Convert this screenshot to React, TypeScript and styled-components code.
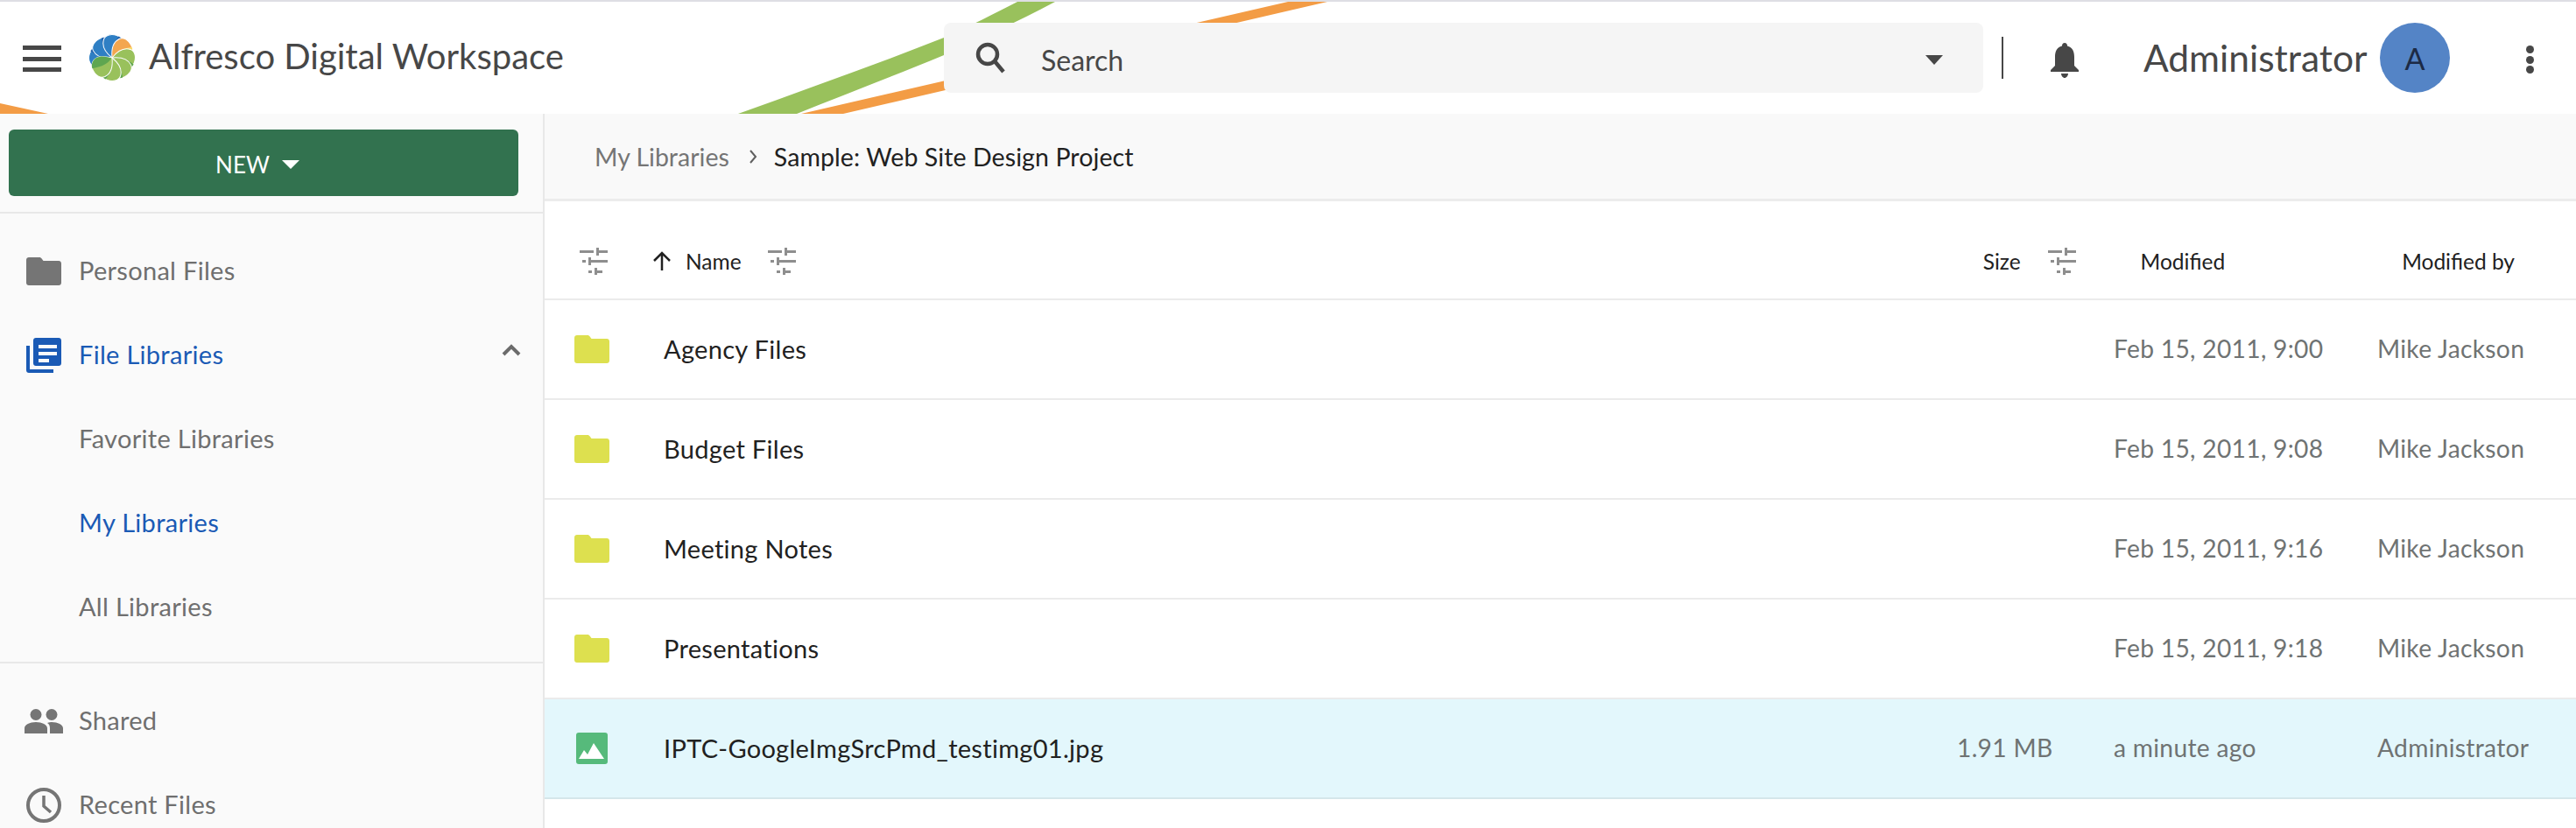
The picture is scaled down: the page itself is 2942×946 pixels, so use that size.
import React from 'react';
import styled, { createGlobalStyle } from 'styled-components';

const GlobalStyle = createGlobalStyle`
  html, body {
    margin: 0;
    padding: 0;
    background: #fff;
  }
  body {
    font-family: 'Lato', 'Liberation Sans', sans-serif;
  }
`;

interface RowData {
  name: string;
  size?: string;
  modified: string;
  by: string;
  kind: 'folder' | 'image';
}

const rows: RowData[] = [
  { name: 'Agency Files', modified: 'Feb 15, 2011, 9:00', by: 'Mike Jackson', kind: 'folder' },
  { name: 'Budget Files', modified: 'Feb 15, 2011, 9:08', by: 'Mike Jackson', kind: 'folder' },
  { name: 'Meeting Notes', modified: 'Feb 15, 2011, 9:16', by: 'Mike Jackson', kind: 'folder' },
  { name: 'Presentations', modified: 'Feb 15, 2011, 9:18', by: 'Mike Jackson', kind: 'folder' },
  {
    name: 'IPTC-GoogleImgSrcPmd_testimg01.jpg',
    size: '1.91 MB',
    modified: 'a minute ago',
    by: 'Administrator',
    kind: 'image',
  },
];

const petals = [
  { angle: -80, main: '#2f7fc4', dark: '#2563ad' },
  { angle: -35, main: '#2f7fc4', dark: '#2563ad' },
  { angle: 10, main: '#2f7fc4', dark: '#2563ad' },
  { angle: 55, main: '#f3a64f', dark: '#fbd968' },
  { angle: 100, main: '#99c15c', dark: '#5fa650' },
  { angle: 145, main: '#99c15c', dark: '#5fa650' },
  { angle: 190, main: '#99c15c', dark: '#5fa650' },
  { angle: 235, main: '#99c15c', dark: '#5fa650' },
];

const Logo = () => (
  <LogoSvg viewBox="-27 -27 54 54">
    {petals.map((p) => (
      <g key={p.angle} transform={`rotate(${p.angle})`}>
        <path
          d="M0 0C-9 -5 -14 -12 -13 -19C-12 -25 -5 -27 1 -26C7 -25 11 -20 10 -14C9 -8 4 -4 0 0Z"
          fill={p.main}
          stroke="#fff"
          strokeWidth="1"
        />
        <path d="M0 -1C-3 -7 -2 -15 3 -25.500C7 -24.500 11 -20 10 -14C9 -8 4 -4 0 -1Z" fill={p.dark} />
      </g>
    ))}
  </LogoSvg>
);

const FilterIcon = () => (
  <Filter viewBox="0 0 32 32">
    <path d="M0 4h16v3H0zM19 1h3v3h10v3H22v3h-3zM3 15h4v3H3zM10 12h3v3h19v3H13v3h-3zM10 27h4v3h-4zM17 24h3v3h6v3h-6v2h-3z" />
  </Filter>
);

const FolderShape = ({ color }: { color: string }) => (
  <svg viewBox="0 0 40 32" width="40" height="32">
    <path
      d="M3 0h12c1 0 2 .5 3 2l1.500 2H37c1.700 0 3 1.300 3 3v22c0 1.700-1.300 3-3 3H3c-1.700 0-3-1.300-3-3V3c0-1.700 1.300-3 3-3z"
      fill={color}
    />
  </svg>
);

const ImageShape = () => (
  <svg viewBox="0 0 36 36" width="36" height="36">
    <rect width="36" height="36" rx="3" fill="#56ba7b" />
    <path d="M3 30l6-10 4 5 7-13 12 18z" fill="#fff" />
  </svg>
);

const App = () => (
  <Page>
    <GlobalStyle />
    <Header>
      <Swoosh viewBox="0 0 1600 128">
        <path d="M0 116L55 128H0Z" fill="#f39c45" />
        <path d="M915 128L1471 0H1516L963 128Z" fill="#f39c45" />
        <path
          d="M843 128C920 100 1000 72 1078 41C1110 27 1136 13 1162 0H1205C1160 24 1120 42 1078 61C1020 85 965 106 910 128Z"
          fill="#99c15c"
        />
      </Swoosh>
      <Burger>
        <span />
        <span />
        <span />
      </Burger>
      <Logo />
      <Title>Alfresco Digital Workspace</Title>
      <SearchBox>
        <svg viewBox="0 0 34 36" width="34" height="36">
          <circle cx="14" cy="14" r="11" fill="none" stroke="#474747" strokeWidth="4.500" />
          <path d="M22 22l10 12" stroke="#474747" strokeWidth="4.500" />
        </svg>
        <SearchText>Search</SearchText>
        <SearchCaret />
      </SearchBox>
      <Divider />
      <Bell viewBox="0 0 32 40">
        <path d="M16 0c2 0 3 1.500 3 3.500C25 5 27 10 27 16v10l5 5v2H0v-2l5-5V16C5 10 7 5 13 3.500 13 1.500 14 0 16 0zM12 35h8c0 2.500-2 5-4 5s-4-2.500-4-5z" />
      </Bell>
      <UserName>Administrator</UserName>
      <Avatar>A</Avatar>
      <MoreDots>
        <span />
        <span />
        <span />
      </MoreDots>
    </Header>
    <Body>
      <Sidebar>
        <NewArea>
          <NewButton>
            NEW <NewCaret />
          </NewButton>
        </NewArea>
        <NavGroup>
          <NavItem>
            <NavIcon viewBox="0 0 40 32" width="40" height="32">
              <path
                d="M3 0h12c1 0 2 .5 3 2l1.500 2H37c1.700 0 3 1.300 3 3v22c0 1.700-1.300 3-3 3H3c-1.700 0-3-1.300-3-3V3c0-1.700 1.300-3 3-3z"
                fill="#757575"
              />
            </NavIcon>
            Personal Files
          </NavItem>
          <NavItem $active>
            <NavIcon viewBox="0 0 40 40" width="40" height="40">
              <path d="M0 9h4v27h27v4H3c-1.700 0-3-1.300-3-3z" fill="#1a5ab5" />
              <path
                d="M11 0h26c1.700 0 3 1.300 3 3v26c0 1.700-1.300 3-3 3H11c-1.700 0-3-1.300-3-3V3c0-1.700 1.300-3 3-3zm3 8v4h21V8zm0 8v4h21v-4zm0 8v4h12v-4z"
                fill="#1a5ab5"
                fillRule="evenodd"
              />
            </NavIcon>
            File Libraries
            <Chevron viewBox="0 0 22 14" width="22" height="14">
              <path d="M2 12l9-9 9 9" fill="none" stroke="#6b6b6b" strokeWidth="4" />
            </Chevron>
          </NavItem>
          <NavItem>
            <NavSpacer />
            Favorite Libraries
          </NavItem>
          <NavItem $active>
            <NavSpacer />
            My Libraries
          </NavItem>
          <NavItem>
            <NavSpacer />
            All Libraries
          </NavItem>
        </NavGroup>
        <NavGroup>
          <NavItem>
            <SharedIcon viewBox="0 0 44 28" width="44" height="28">
              <circle cx="13" cy="6.500" r="6.500" fill="#757575" />
              <circle cx="31" cy="6.500" r="6.500" fill="#757575" />
              <path
                d="M0 28v-6c0-4 6-7 13-7s13 3 13 7v6zM29 28v-6c0-3-1-5-3-6 2-.7 4-1 5-1 7 0 13 3 13 7v6z"
                fill="#757575"
              />
            </SharedIcon>
            Shared
          </NavItem>
          <NavItem>
            <NavIcon viewBox="0 0 40 40" width="40" height="40">
              <circle cx="20" cy="20" r="18" fill="none" stroke="#757575" strokeWidth="4" />
              <path d="M20 9v12l8 7" fill="none" stroke="#757575" strokeWidth="3.500" />
            </NavIcon>
            Recent Files
          </NavItem>
        </NavGroup>
      </Sidebar>
      <Main>
        <Breadcrumb>
          <CrumbLink>My Libraries</CrumbLink>
          <svg viewBox="0 0 10 16" width="10" height="16">
            <path d="M2 1l6 7-6 7" fill="none" stroke="#5f5f5f" strokeWidth="2" />
          </svg>
          <CrumbCurrent>Sample: Web Site Design Project</CrumbCurrent>
        </Breadcrumb>
        <TableHead>
          <FilterIcon />
          <SortArrow viewBox="0 0 22 22" width="22" height="22">
            <path d="M11 22V2M2 11l9-9 9 9" fill="none" stroke="#212121" strokeWidth="2.500" />
          </SortArrow>
          <HeadLabel $right={30}>Name</HeadLabel>
          <FilterIcon />
          <HeadSpacer />
          <HeadLabel $right={31}>Size</HeadLabel>
          <FilterIcon />
          <HeadLabel $left={74}>Modified</HeadLabel>
          <HeadLabel $left={202}>Modified by</HeadLabel>
        </TableHead>
        {rows.map((row) => (
          <Row key={row.name} $selected={row.kind === 'image'}>
            <RowIcon>{row.kind === 'folder' ? <FolderShape color="#dde04f" /> : <ImageShape />}</RowIcon>
            <RowName>{row.name}</RowName>
            <SizeCell>{row.size}</SizeCell>
            <MetaCell>{row.modified}</MetaCell>
            <MetaCell>{row.by}</MetaCell>
          </Row>
        ))}
      </Main>
    </Body>
  </Page>
);

const Page = styled.div`
  width: 2942px;
  height: 946px;
  overflow: hidden;
  display: flex;
  flex-direction: column;
`;

const Header = styled.header`
  position: relative;
  flex: none;
  height: 128px;
  border-top: 2px solid #dedee4;
  display: flex;
  align-items: center;
  padding-left: 26px;
  background: #fff;
  color: #474747;
  > * {
    position: relative;
  }
`;

const Swoosh = styled.svg`
  && {
    position: absolute;
  }
  left: 0;
  top: 0;
  width: 1600px;
  height: 128px;
`;

const Burger = styled.div`
  width: 44px;
  height: 30px;
  display: flex;
  flex-direction: column;
  justify-content: space-between;
  margin-right: 31px;
  margin-top: 2px;
  span {
    display: block;
    height: 5px;
    background: #474747;
  }
`;

const LogoSvg = styled.svg`
  width: 54px;
  height: 54px;
  flex: none;
  margin-top: -1px;
`;

const Title = styled.div`
  margin-left: 15px;
  width: 476px;
  font-size: 40px;
  font-weight: 400;
  white-space: nowrap;
  margin-top: -4px;
`;

const SearchBox = styled.div`
  margin-left: 432px;
  width: 1187px;
  height: 80px;
  box-sizing: border-box;
  background: #f5f5f5;
  border-radius: 8px;
  display: flex;
  align-items: center;
  padding: 0 46px 0 36px;
`;

const SearchText = styled.span`
  margin-left: 41px;
  font-size: 32px;
  color: #474747;
  margin-top: 4px;
`;

const SearchCaret = styled.span`
  margin-left: auto;
  width: 0;
  height: 0;
  border-left: 10px solid transparent;
  border-right: 10px solid transparent;
  border-top: 11px solid #474747;
  margin-top: 4px;
`;

const Divider = styled.div`
  width: 2px;
  height: 48px;
  margin-left: 21px;
  background: #474747;
`;

const Bell = styled.svg`
  width: 32px;
  height: 40px;
  margin-left: 54px;
  fill: #474747;
  margin-top: 5px;
`;

const UserName = styled.div`
  margin-left: 74px;
  width: 254px;
  font-size: 42.500px;
  font-weight: 400;
  white-space: nowrap;
  margin-top: -2px;
`;

const Avatar = styled.div`
  margin-left: 16px;
  width: 80px;
  height: 80px;
  border-radius: 50%;
  background: #5484c6;
  color: #1c2a45;
  display: flex;
  align-items: center;
  justify-content: center;
  font-size: 34px;
`;

const MoreDots = styled.div`
  margin-left: 87px;
  width: 9px;
  height: 32px;
  margin-top: 4px;
  display: flex;
  flex-direction: column;
  justify-content: space-between;
  span {
    width: 9px;
    height: 9px;
    border-radius: 50%;
    background: #474747;
  }
`;

const Body = styled.div`
  flex: 1;
  min-height: 0;
  display: flex;
`;

const Sidebar = styled.aside`
  flex: none;
  width: 620px;
  background: #fafafa;
  border-right: 2px solid #e8e8e8;
`;

const NewArea = styled.div`
  height: 114px;
  box-sizing: border-box;
  padding: 18px 28px 0 10px;
  border-bottom: 2px solid #e8e8e8;
`;

const NewButton = styled.div`
  height: 76px;
  box-sizing: border-box;
  padding: 4px 14px 0 0;
  border-radius: 6px;
  background: #32724f;
  color: #fff;
  display: flex;
  align-items: center;
  justify-content: center;
  gap: 14px;
  font-size: 26px;
`;

const NewCaret = styled.span`
  width: 0;
  height: 0;
  border-left: 10px solid transparent;
  border-right: 10px solid transparent;
  border-top: 10px solid #fff;
`;

const NavGroup = styled.div`
  padding: 18px 0 14px;
  border-bottom: 2px solid #e8e8e8;
  &:last-child {
    border-bottom: 0;
  }
`;

const NavItem = styled.div<{ $active?: boolean }>`
  height: 96px;
  box-sizing: border-box;
  padding: 0 25px 3px 30px;
  display: flex;
  align-items: center;
  font-size: 29px;
  letter-spacing: 0.3px;
  color: ${(p) => (p.$active ? '#1a5ab5' : '#6f6f6f')};
`;

const NavIcon = styled.svg`
  flex: none;
  margin-right: 20px;
  margin-top: 3px;
`;

const SharedIcon = styled(NavIcon)`
  margin-left: -2px;
  margin-right: 18px;
`;

const NavSpacer = styled.span`
  width: 60px;
`;

const Chevron = styled.svg`
  margin-left: auto;
  margin-top: -10px;
`;

const Main = styled.main`
  flex: 1;
  min-width: 0;
`;

const Breadcrumb = styled.div`
  height: 97px;
  border-bottom: 3px solid #ececec;
  background: #f9f9f9;
  display: flex;
  align-items: center;
  padding-left: 57px;
  font-size: 28.500px;
  gap: 22px;
`;

const CrumbLink = styled.span`
  color: #757575;
`;

const CrumbCurrent = styled.span`
  color: #212121;
  letter-spacing: 0.1px;
  margin-left: -3px;
`;

const TableHead = styled.div`
  height: 86px;
  padding: 25px 70px 0 40px;
  display: flex;
  align-items: center;
  border-bottom: 2px solid #ebebeb;
  font-size: 24.500px;
  color: #212121;
  > svg:first-child {
    margin-right: 51px;
  }
`;

const Filter = styled.svg`
  width: 32px;
  height: 32px;
  flex: none;
  fill: #8e8e8e;
`;

const SortArrow = styled.svg`
  margin-right: 16px;
`;

const HeadLabel = styled.span<{ $left?: number; $right?: number }>`
  margin-left: ${(p) => p.$left ?? 0}px;
  margin-right: ${(p) => p.$right ?? 0}px;
  white-space: nowrap;
`;

const HeadSpacer = styled.span`
  flex: 1;
`;

const Row = styled.div<{ $selected?: boolean }>`
  height: 112px;
  display: grid;
  grid-template-columns: 136px 1fr 179px 301px 227px;
  align-items: center;
  border-bottom: 2px solid ${(p) => (p.$selected ? '#d5e6ea' : '#ebebeb')};
  background: ${(p) => (p.$selected ? '#e3f7fc' : '#fff')};
`;

const RowIcon = styled.div`
  display: flex;
  justify-content: center;
  width: 40px;
  margin-left: 34px;
  svg {
    display: block;
  }
`;

const RowName = styled.div`
  font-size: 29px;
  letter-spacing: 0.3px;
  padding-bottom: 2px;
  color: #212121;
`;

const SizeCell = styled.div`
  font-size: 28.200px;
  letter-spacing: 0.3px;
  color: #6f7373;
  text-align: right;
  padding-right: 74px;
  padding-bottom: 2px;
  white-space: nowrap;
`;

const MetaCell = styled.div`
  font-size: 28.200px;
  letter-spacing: 0.3px;
  padding-bottom: 2px;
  color: #6f7373;
  white-space: nowrap;
`;

export default App;
